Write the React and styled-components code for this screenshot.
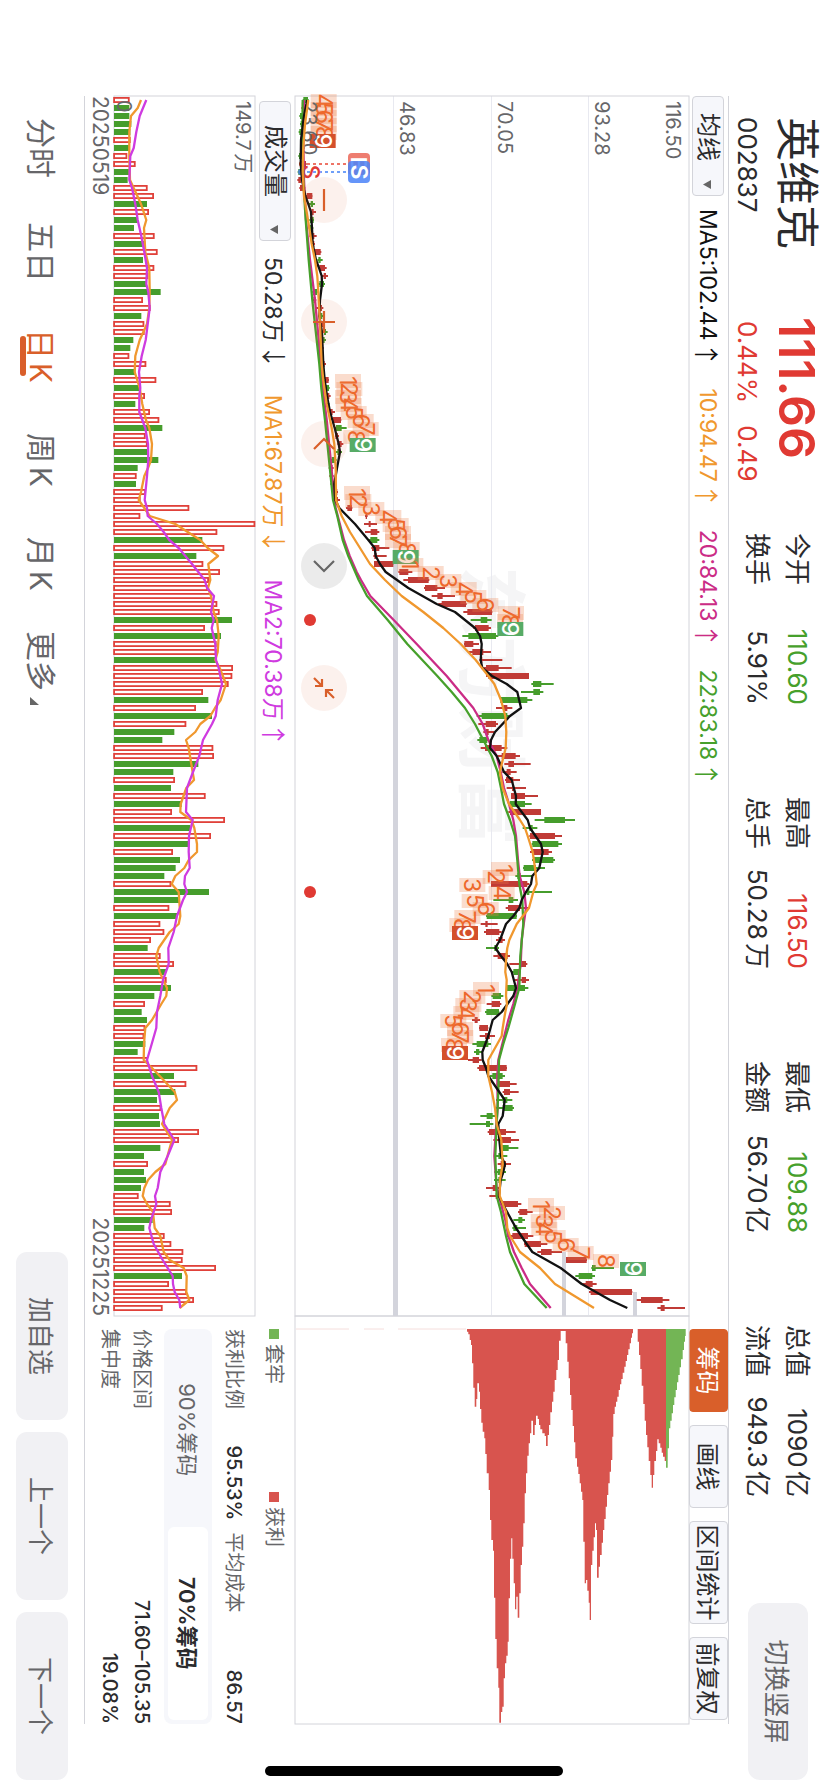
import React, { useState } from 'react';
import styled, { createGlobalStyle } from 'styled-components';

const C = {
  red: '#e03a33',
  green: '#46a02b',
  candleRed: '#c03b36',
  candleGreen: '#469d2c',
  orange: '#f0982e',
  magenta: '#cb2c86',
  purple: '#cf3be0',
  accent: '#d95f2a',
  line: '#d3d4da',
  grid: '#e8e9f0',
  ink: '#2b2b2d',
  sub: '#666669',
  panel: '#f6f7fb',
  button: '#f1f1f4',
};

const GlobalStyle = createGlobalStyle`
  * { box-sizing: border-box; }
  body { margin: 0; background: #fff; }
  button, select { font: inherit; color: inherit; margin: 0; padding: 0; border: 0; background: none; cursor: pointer; }
  button { padding-bottom: 2px; }
`;

/* The app is held sideways: the landscape stage is turned a quarter clockwise. */
const Viewport = styled.div`
  position: relative;
  width: 100vw;
  height: 100vh;
  overflow: hidden;
`;

const Stage = styled.div`
  width: 100vh;
  height: 100vw;
  transform-origin: 0 0;
  transform: translateX(100vw) rotate(90deg);
  display: flex;
  flex-direction: column;
  padding-left: 96px;
  background: #fff;
  color: ${C.ink};
  font-family: Inter, 'Noto Sans CJK SC', sans-serif;
  white-space: nowrap;
  text-autospace: normal;
`;

const Header = styled.header`
  display: flex;
  align-items: flex-start;
  height: 99px;
  padding: 6px 12px 0 21px;
`;

const Identity = styled.div`
  width: 200px;
  line-height: 50px;
`;

const StockName = styled.h1`
  margin: 0;
  font-size: 44px;
  font-weight: 400;
  line-height: 50px;
`;

const StockCode = styled.div`
  font-size: 26px;
`;

const Quote = styled.div`
  width: 216px;
  line-height: 50px;
  color: ${C.red};
`;

const Price = styled.div`
  font-size: 50px;
  font-weight: 600;
`;

const Change = styled.div`
  display: flex;
  gap: 22px;
  padding-left: 4px;
  font-size: 26px;
`;

const Stats = styled.div`
  flex: 1;
  display: flex;
  justify-content: space-between;
  padding-top: 5px;
`;

const StatColumn = styled.dl`
  width: 172px;
  margin: 0;
  font-size: 26px;
  line-height: 40px;
`;

const Stat = styled.div`
  display: flex;
  justify-content: space-between;
  dt, dd { margin: 0; }
  dd { color: ${(p) => p.$color || C.ink}; }
`;

const RotateButton = styled.button`
  width: 177px;
  height: 60px;
  margin: 14px 0 0 106px;
  border-radius: 12px;
  background: ${C.button};
  color: ${C.sub};
  font-size: 26px;
`;

const Body = styled.main`
  display: grid;
  grid-template-columns: 1220fr 408fr;
  margin-right: 68px;
  border-top: 1px solid ${C.line};
  border-bottom: 1px solid ${C.line};
`;

const ChartColumn = styled.section`
  min-width: 0;
`;

const Toolbar = styled.div`
  display: flex;
  align-items: center;
  height: ${(p) => p.$height}px;
  padding-left: ${(p) => p.$inset || 0}px;
  font-size: 23px;
  text-autospace: no-autospace;
`;

const Picker = styled.label`
  position: relative;
  width: ${(p) => p.$width}px;
  height: 32px;
  select {
    width: 100%;
    height: 32px;
    padding-left: ${(p) => p.$inset}px;
    appearance: none;
    border: 1px solid ${C.line};
    border-radius: 4px;
    background: ${C.panel};
    font-size: 24px;
    line-height: 30px;
  }
  svg {
    position: absolute;
    right: 7px;
    top: 13px;
    pointer-events: none;
  }
`;

const Readings = styled.div`
  display: flex;
  gap: ${(p) => p.$gap}px;
  padding-left: ${(p) => p.$lead}px;
`;

const Readout = styled.span`
  display: flex;
  align-items: center;
  color: ${(p) => p.$color};
`;

const Trend = styled.span`
  display: flex;
  justify-content: center;
  width: 12px;
  margin-left: 8px;
  font-family: 'Noto Sans CJK SC', sans-serif;
  font-size: 25px;
  line-height: 30px;
`;

const PlotBox = styled.div`
  position: relative;
`;

const Plot = styled.svg`
  display: block;
  width: 100%;
  height: auto;
  overflow: visible;
`;

const Controls = styled.div`
  position: absolute;
  left: 81px;
  bottom: 7px;
  display: flex;
  gap: 76px;
`;

const RoundButton = styled.button`
  display: grid;
  place-items: center;
  width: 46px;
  height: 46px;
  padding: 0;
  border-radius: 50%;
  background: ${(p) => (p.$muted ? 'rgba(120, 120, 120, 0.15)' : 'rgba(225, 100, 50, 0.09)')};
  svg {
    fill: none;
    stroke: ${(p) => (p.$muted ? '#666' : C.accent)};
    stroke-width: 2.2;
  }
`;

const Dates = styled.div`
  display: flex;
  justify-content: space-between;
  height: 28px;
  line-height: 26px;
  color: ${C.sub};
  font-size: 21px;
`;

const SideColumn = styled.aside`
  min-width: 0;
  text-autospace: no-autospace;
`;

const ToolButtons = styled.div`
  display: flex;
  gap: 13px;
  height: 39px;
  padding-left: 13px;
`;

const ToolButton = styled.button`
  width: ${(p) => (p.$wide ? 103 : 83)}px;
  height: 39px;
  border: 1px solid ${(p) => (p.$active ? C.accent : C.line)};
  border-radius: 4px;
  background: ${(p) => (p.$active ? C.accent : C.panel)};
  color: ${(p) => (p.$active ? '#fff' : C.ink)};
  font-size: 24px;
`;

const ChipPanel = styled.div`
  padding-left: 13px;
  font-size: 20px;
  color: ${C.sub};
`;

const Legend = styled.div`
  display: grid;
  grid-template-columns: 163px 1fr;
  line-height: 40px;
`;

const LegendItem = styled.span`
  display: flex;
  align-items: center;
  gap: 5px;
  &::before {
    content: '';
    width: 10px;
    height: 10px;
    background: ${(p) => p.$color};
  }
`;

const Metrics = styled.div`
  display: flex;
  justify-content: space-between;
  gap: 12px;
  line-height: ${(p) => p.$height}px;
`;

const Metric = styled.div`
  flex: 1;
  display: flex;
  justify-content: space-between;
  b {
    font-weight: 500;
    color: ${C.ink};
  }
`;

const Segments = styled.div`
  display: flex;
  height: 48px;
  margin: 2px 0 6px;
  padding: 4px;
  border-radius: 8px;
  background: ${C.panel};
`;

const Segment = styled.button`
  flex: 1;
  border-radius: 6px;
  background: ${(p) => (p.$active ? '#fff' : 'transparent')};
  color: ${(p) => (p.$active ? C.ink : C.sub)};
  font-size: 22px;
  font-weight: ${(p) => (p.$active ? 600 : 400)};
`;

const Footer = styled.footer`
  flex: 1;
  display: flex;
  align-items: center;
  justify-content: space-between;
  padding-right: 12px;
  color: ${C.sub};
`;

const Periods = styled.nav`
  display: flex;
`;

const Period = styled.button`
  position: relative;
  width: 104px;
  height: 52px;
  font-size: 30px;
  color: ${(p) => (p.$active ? C.accent : C.sub)};
  &::after {
    content: '';
    position: absolute;
    left: 32px;
    bottom: 4px;
    width: 40px;
    height: 6px;
    border-radius: 3px;
    background: ${(p) => (p.$active ? C.accent : 'transparent')};
  }
  svg { margin-left: 6px; }
`;

const Actions = styled.div`
  display: flex;
  gap: 12px;
`;

const Action = styled.button`
  width: 168px;
  height: 52px;
  border-radius: 11px;
  background: ${C.button};
  font-size: 26px;
`;

const HomeIndicator = styled.div`
  position: absolute;
  left: 32%;
  right: 32%;
  bottom: 16px;
  height: 10px;
  border-radius: 5px;
  background: #000;
  pointer-events: none;
`;

/* ---------- chart data ---------- */

const STEP = 8;
const xOf = (i) => 4 + i * STEP;
const yOf = (v) => 409 - v / 3;
const volY = (v) => 142 - (v - 101) / 3;

/* low, body start, body end, high, direction (1 up, 0 down) */
const candles = [
  [68, 70, 84, 86, 0], [64, 66, 74, 76, 1], [58, 60, 70, 72, 0], [60, 62, 72, 74, 0], [56, 58, 70, 72, 0],
  [60, 62, 68, 72, 1], [60, 63, 70, 74, 0], [55, 57, 68, 70, 0], [58, 60, 78, 80, 1], [53, 55, 66, 68, 0],
  [52, 55, 64, 66, 1], [58, 60, 72, 76, 1], [78, 80, 97, 97, 1], [87, 92, 99, 105, 0], [90, 94, 101, 108, 1],
  [88, 90, 101, 102, 0], [86, 88, 98, 100, 0], [88, 90, 103, 110, 1], [93, 95, 103, 105, 1], [103, 104, 122, 124, 1],
  [112, 115, 122, 128, 0], [117, 118, 135, 140, 1], [126, 131, 138, 144, 1], [114, 118, 132, 135, 0],
  [97, 99, 111, 113, 0], [97, 100, 107, 109, 1], [108, 117, 126, 130, 1], [116, 119, 127, 130, 0],
  [116, 120, 132, 135, 1], [128, 132, 138, 143, 0], [125, 128, 134, 138, 0], [118, 121, 128, 131, 1],
  [120, 124, 130, 132, 0], [127, 129, 134, 138, 1], [121, 124, 130, 133, 1], [129, 130, 146, 147, 1],
  [134, 137, 147, 149, 0], [138, 140, 148, 152, 1], [136, 138, 147, 149, 0], [144, 150, 158, 165, 1],
  [156, 158, 183, 184, 1], [165, 168, 185, 200, 0], [165, 166, 174, 177, 1], [172, 177, 185, 190, 1],
  [167, 172, 180, 186, 0], [150, 155, 168, 170, 0], [146, 149, 158, 161, 1], [148, 152, 158, 161, 1],
  [151, 153, 162, 164, 0], [156, 158, 172, 174, 1], [164, 166, 174, 180, 1], [198, 202, 216, 217, 1],
  [255, 257, 261, 263, 1], [252, 266, 272, 291, 1], [255, 272, 292, 298, 1], [266, 271, 292, 298, 0],
  [274, 276, 298, 328, 1], [280, 283, 290, 320, 1], [282, 282, 340, 340, 1], [355, 358, 385, 397, 1],
  [370, 384, 446, 448, 1], [432, 435, 472, 495, 1], [455, 472, 488, 525, 1], [475, 485, 558, 560, 1],
  [550, 562, 636, 637, 1], [572, 602, 622, 635, 0], [580, 585, 626, 633, 1], [547, 565, 648, 655, 0],
  [552, 553, 580, 597, 1], [566, 577, 610, 633, 1], [598, 602, 607, 667, 1], [610, 618, 656, 695, 1],
  [618, 625, 747, 747, 1], [754, 759, 784, 821, 0], [723, 760, 780, 790, 0], [661, 661, 742, 757, 0],
  [648, 670, 682, 697, 1], [590, 605, 682, 687, 0], [595, 617, 648, 654, 1], [610, 618, 626, 642, 1],
  [592, 598, 622, 628, 0], [602, 615, 665, 682, 1], [653, 665, 707, 720, 1], [673, 685, 702, 752, 1],
  [667, 680, 692, 710, 1], [675, 678, 700, 720, 1], [680, 696, 702, 738, 1], [693, 693, 735, 774, 1],
  [687, 690, 735, 755, 0], [685, 690, 783, 783, 1], [764, 793, 855, 885, 0], [728, 748, 758, 772, 0],
  [748, 750, 825, 846, 1], [755, 757, 835, 846, 0], [750, 757, 806, 816, 1], [756, 760, 820, 825, 0],
  [729, 731, 768, 795, 0], [706, 712, 722, 758, 0], [633, 633, 742, 748, 1], [730, 740, 748, 816, 0],
  [640, 686, 700, 714, 0], [677, 684, 720, 748, 1], [618, 620, 710, 711, 0], [602, 616, 623, 653, 1],
  [612, 618, 658, 665, 1], [648, 655, 668, 675, 1], [618, 643, 653, 657, 0], [640, 653, 683, 690, 1],
  [688, 722, 738, 742, 1], [695, 700, 718, 720, 0], [705, 725, 738, 747, 1], [678, 680, 735, 745, 0],
  [634, 638, 663, 670, 0], [620, 635, 660, 664, 1], [615, 619, 657, 658, 0], [576, 584, 593, 600, 1],
  [597, 598, 624, 625, 1], [599, 615, 630, 645, 1], [577, 590, 625, 633, 0], [582, 588, 598, 606, 0],
  [564, 578, 597, 605, 1], [592, 597, 680, 681, 1], [630, 637, 668, 675, 0], [650, 656, 690, 710, 1],
  [668, 672, 690, 716, 1], [648, 668, 682, 697, 0], [645, 668, 698, 702, 0], [601, 620, 638, 650, 0],
  [569, 618, 630, 640, 0], [623, 627, 678, 707, 1], [640, 662, 693, 717, 1], [657, 665, 686, 715, 0],
  [642, 655, 665, 682, 0], [653, 662, 678, 693, 1], [643, 653, 670, 678, 0], [642, 655, 662, 677, 0],
  [618, 638, 648, 662, 1], [628, 647, 655, 660, 1], [668, 668, 714, 724, 1], [714, 718, 742, 758, 1],
  [700, 715, 727, 735, 0], [697, 700, 712, 738, 0], [680, 697, 744, 760, 1], [732, 734, 783, 802, 1],
  [772, 783, 815, 846, 1], [858, 858, 920, 921, 1], [934, 936, 947, 1002, 0], [886, 896, 937, 945, 0],
  [905, 917, 938, 950, 1], [927, 932, 1056, 1057, 1], [1070, 1083, 1148, 1168, 1], [1132, 1142, 1154, 1215, 1],
];

const volumes = (
  '148R 147G 147G 153G 150G 151R 147G 141R 166R 147G 142G 202R 221R 200G 206R 172G 161G 223R 195G 232R ' +
  '188G 222R 204R 198G 241G 188R 211R 183G 192R 193R 159G 150G 147R 198R 165G 228R 177G 194R 165G 209R ' +
  '237R 246G 196R 202R 202G 234G 172G 169R 167G 197R 181R 327R 180R 525R 411R 366G 432R 348G 369R 419R ' +
  '386R 383R 395R 411R 418R 455G 374R 422G 409R 409R 409G 458R 456R 445R 368R 384G 347R 395G 318R 282G ' +
  '246G 399R 401R 354G 279G 284R 272G 376R 304G 275R 434R 330G 392R 325G 278R 299G 286G 252G 273R 386G ' +
  '297G 267R 290G 240R 252R 212R 202G 241R 281R 257G 259R 272G 222G 194R 184G 200G 195R 192R 195G 172G ' +
  '202R 351R 281G 318R 285G 230G 243R 236G 239G 356R 296R 240G 191G 203R 191G 197G 182G 175R 271R 275R ' +
  '217G 192G 253R 273R 309R 307R 407R 305G 266R 320R 341R 247R'
).split(' ').map((s) => ({ v: parseInt(s, 10), up: s.endsWith('R') }));

const averages = [
  {
    color: C.magenta,
    d: '0 72 5 70 10 72 15 78 20 90 25 105 30 116 35 125 40 140 45 152 49 161 51 167 55 192 57 209 59 230 60 243 62 271 65 341 68 410 72 500 74 540 76 580 78 608 80 625 82 650 84 662 86 672 88 687 90 700 92 708 95 714 97 719 99 733 101 738 103 731 105 725 108 722 111 712 113 700 115 685 118 667 120 655 122 652 126 653 129 647 132 643 136 650 138 663 140 676 142 685 144 702 146 725 148 750 151 812',
  },
  {
    color: C.green,
    d: '0 68 5 67 10 70 15 77 20 86 25 97 30 110 33 118 36 124 40 135 45 147 50 159 52 172 55 188 57 205 60 236 62 261 65 323 68 382 72 472 74 515 76 555 78 585 80 610 82 635 84 653 86 663 88 672 90 690 92 705 95 712 98 718 100 727 103 730 107 721 111 718 113 705 116 685 118 670 120 657 124 655 128 650 132 646 137 650 139 663 142 678 144 690 148 733 151 800',
  },
  {
    color: '#111',
    d: '0 82 2 72 5 63 8 62 10 66 12 76 13 85 14 93 16 96 18 98 20 108 21 117 22 125 23 126 25 120 27 118 29 126 33 130 35 134 37 141 39 150 41 164 43 176 44 180 46 171 48 163 50 166 51 178 53 225 55 265 56 284 57 287 58 300 59 317 61 385 63 470 64 525 66 585 67 600 68 605 70 602 71 607 72 636 73 680 74 712 76 723 77 690 79 645 80 633 81 630 82 650 84 672 85 695 87 708 88 707 90 743 91 750 93 783 94 788 96 778 97 757 98 753 99 738 100 725 101 718 102 700 103 678 105 660 106 646 107 663 108 682 109 695 111 708 112 700 114 665 115 638 117 625 119 607 120 608 121 618 122 625 124 658 125 674 127 668 128 655 130 658 132 663 133 675 134 670 135 662 137 657 138 668 141 708 143 740 144 757 146 842 148 905 150 990 151 1042',
  },
  {
    color: C.orange,
    d: '0 85 3 75 6 70 9 68 12 72 15 84 18 95 20 105 22 112 24 115 28 120 33 125 35 130 38 140 41 155 43 163 46 167 50 168 52 185 54 210 56 240 58 270 60 315 62 365 64 430 66 490 68 542 70 587 72 625 73 643 75 663 77 676 79 679 81 677 83 665 84 660 86 668 88 687 90 720 91 735 92 743 94 758 96 765 98 770 99 760 101 747 103 710 105 688 106 682 107 679 109 676 110 680 112 678 113 681 114 676 116 668 117 665 118 652 120 625 122 625 124 636 126 645 128 650 130 664 133 668 135 660 137 659 139 678 141 682 142 690 144 720 146 780 148 825 151 942',
  },
];

const volumeAverages = [
  {
    color: C.orange,
    d: '0 182 1 172 2 152 4 147 7 147 10 149 11 160 13 182 15 198 16 191 19 195 21 207 24 208 26 207 28 200 30 178 32 165 34 163 36 178 38 186 40 197 41 207 43 215 45 212 46 203 47 192 49 182 50 175 51 192 52 208 53 285 54 322 55 360 56 382 57 413 58 384 60 390 61 383 62 392 64 400 65 410 67 415 69 412 70 405 71 418 73 437 75 421 76 404 77 390 78 360 79 345 80 317 81 325 83 333 85 341 86 318 88 301 89 300 90 333 91 342 93 350 94 350 95 325 96 312 97 285 98 274 99 295 102 300 103 295 104 268 106 235 107 228 109 238 111 260 112 258 113 243 115 215 116 195 118 191 120 190 121 215 122 238 124 283 125 290 126 268 128 245 130 275 131 268 133 255 134 225 135 203 136 192 137 187 138 200 139 218 141 223 142 240 144 250 145 268 146 310 147 319 149 318 150 327 151 298',
  },
  {
    color: C.purple,
    d: '0 198 2 178 4 168 6 160 7 150 10 147 11 155 13 165 15 172 17 183 19 192 21 200 23 198 24 204 26 208 28 202 30 196 32 184 34 176 36 180 37 177 39 177 41 195 43 203 45 204 47 200 50 193 51 200 52 202 53 230 54 250 55 267 56 295 58 335 60 373 61 380 62 401 64 392 65 400 66 394 68 405 70 407 71 415 73 425 75 412 77 406 78 395 80 368 82 357 84 338 86 320 89 317 90 337 92 326 94 325 96 328 97 314 98 312 99 320 100 308 102 290 104 280 106 264 108 265 110 248 112 240 114 230 116 228 118 214 120 200 122 215 124 235 126 243 128 252 130 282 132 262 134 240 136 232 137 224 138 228 140 212 141 207 143 220 145 247 147 277 148 278 149 283 150 297 151 300',
  },
];

/* sequence markers: first bar, first digit, tone of the closing 9, centre of each marker */
const sequences = [
  { bar: 0, from: 4, end: '#d4502b', at: [131, 131, 131, 131, 131, 128] },
  { bar: 35, from: 1, end: '#57ab66', at: [204, 208, 204, 206, 221, 242, 257, 229, 248] },
  { bar: 49, from: 1, end: '#57ab66', at: [231, 235, 274, 325, 347, 354, 354, 380, 377] },
  { bar: 58, from: 1, end: '#57ab66', at: [391, 452, 505, 551, 580, 616, 693, 690, 691] },
  { bar: 96, from: 1, end: '#d4502b', at: [672, 647, 577, 665, 584, 617, 562, 547, 555] },
  { bar: 111, from: 1, end: '#d4502b', at: [618, 577, 565, 559, 520, 540, 541, 522, 525] },
  { bar: 138, from: 1, end: '#57ab66', at: [783, 816, 791, 793, 818, 857, 902, 978, 1059] },
];

const profitChips =
  '527 87 531 95 535 103 539 120 543 135 546 190 550 263 554 320 559 297 562 250 567 275 570 327 574 368 578 395 583 415 586 462 590 520 596 570 600 660 604 720 609 752 612 893 616 1017 620 1105 625 1163 628 1268 633 1236 637 1220 641 1135 645 1090 649 1067 653 1025 656 895 660 776 664 715 667 776 671 850 675 928 679 890 683 953 688 880 692 795 696 740 700 670 704 580 708 520 712 467 716 430 720 400 724 362 729 405 734 375 738 347 743 357 747 375 751 388 757 400 764 408 768 438 773 405 777 375 781 337 786 305 790 275 794 240 799 210 803 180 807 122 812 93 824 93 827 130 832 185 836 235 840 285 844 330 848 378 852 427 856 475 861 500 865 522 869 550 873 575 877 600 880 725 884 850 888 840 892 872 896 908 899 960 903 795 907 752 911 712 915 670 918 690 921 833 926 800 930 765 935 728 939 690 943 657 947 620 951 585 955 550 959 515 963 480 967 410 970 342 974 320 978 305 982 290 986 270 990 253 994 237 998 218 1003 200 1007 183 1011 165 1015 148 1019 130 1023 113 1026 100 1029 87 1040 87 1043 125 1047 165 1051 207 1055 257 1060 312 1064 362 1068 405 1072 442 1076 483 1081 525 1085 563 1089 525 1093 483 1098 453 1102 418 1106 430 1111 443 1115 458 1119 470 1124 483 1128 492';
const trappedChips =
  '1128 503 1133 445 1137 385 1141 362 1145 340 1149 315 1153 292 1157 270 1161 247 1165 225 1169 202 1173 178 1178 150 1182 125 1185 108 1187 87';

const pairs = (s) => {
  const n = s.split(' ').map(Number);
  return n.reduce((out, v, k) => (k % 2 ? out : [...out, [v, n[k + 1]]]), []);
};

const linePath = (d, y) => 'M' + pairs(d).map(([i, v]) => `${xOf(i)} ${y(v).toFixed(1)}`).join('L');

/* stepped silhouette: each price level is a flat bar */
const chipPath = (d) => {
  const pts = pairs(d);
  const y = (v) => (399 - v / 3).toFixed(1);
  const x = (v) => (13 + (v - 87) / 3).toFixed(1);
  let out = `M13 ${y(pts[0][0])}`;
  pts.forEach(([v, l], k) => {
    const next = pts[k + 1] ? pts[k + 1][0] : v + 3;
    out += `H${x(l)}V${y(next)}`;
  });
  return `${out}H13Z`;
};

const FONT = "Inter, 'Noto Sans CJK SC', sans-serif";

function PriceChart() {
  return (
    <Plot viewBox="0 0 1220 395" role="img" aria-label="日K" fontFamily={FONT}>
      <text x="470" y="224" fontSize="70" fontWeight="700" fill="#f5f5f6">东方财富</text>
      {[100, 197, 295].map((y) => (
        <rect key={y} x="0" y={y} width="1220" height="1" fill={C.grid} />
      ))}
      <g fill="#d3d4dc">
        <rect x="468" y="291" width="752" height="5" />
        <rect x="1156" y="123" width="64" height="4" />
        <rect x="1196" y="52" width="24" height="4" />
      </g>
      <rect x="0" y="0" width="1220" height="394" fill="none" stroke={C.line} strokeWidth="1" />
      {candles.map(([lo, a, b, hi, up], i) => (
        <g key={i} fill={up ? C.candleRed : C.candleGreen}>
          <rect x={xOf(i) - 1} y={yOf(hi)} width="2" height={(hi - lo) / 3} />
          <rect x={xOf(i) - 3} y={yOf(b)} width="6" height={(b - a) / 3} />
        </g>
      ))}
      {sequences.map((s) => (
        <g key={s.bar} fontSize="23" textAnchor="middle">
          {s.at.map((v, k) => {
            const digit = s.from + k;
            const x = xOf(s.bar + k) + 1;
            const last = digit === 9;
            return (
              <g key={digit}>
                <rect x={x - 7} y={yOf(v) - 13} width="14" height="26" fill={last ? s.end : '#ee7f45'} fillOpacity={last ? 1 : 0.27} />
                <text x={x} y={yOf(v) + 8} fill={last ? '#fff' : '#ee682b'} fontWeight={last ? 500 : 400}>{digit}</text>
              </g>
            );
          })}
        </g>
      ))}
      <g fontSize="20" fill={C.sub}>
        <text x="5" y="23">116.50</text>
        <text x="5" y="94">93.28</text>
        <text x="5" y="191">70.05</text>
        <text x="5" y="289">46.83</text>
        <text x="5" y="387">23.60</text>
      </g>
      <g fill="none" strokeWidth="2" strokeDasharray="3 3">
        <path d="M68 388V341" stroke="#ee7466" />
        <path d="M76 388V341" stroke="#6f9ff8" />
      </g>
      <rect x="57" y="319" width="22" height="22" rx="4" fill="#ee7d70" />
      <text x="68" y="338" fontSize="22" fontWeight="600" fill="#fff" textAnchor="middle">B</text>
      <rect x="65" y="319" width="22" height="22" rx="4" fill="#4a82f8" fillOpacity="0.85" />
      <text x="76" y="338" fontSize="23" fontWeight="600" fill="#fff" textAnchor="middle">S</text>
      <text x="76" y="386" fontSize="23" fontWeight="500" fill={C.red} textAnchor="middle">S</text>
      <circle cx="68" cy="387" r="3" fill="#d4502b" />
      <circle cx="76" cy="388" r="3" fill="#4a82c8" />
      {averages.map((a) => (
        <path key={a.color} d={linePath(a.d, yOf)} fill="none" stroke={a.color} strokeWidth="2.3" strokeLinejoin="round" />
      ))}
      <circle cx="524" cy="379" r="6" fill={C.red} />
      <circle cx="796" cy="379" r="6" fill={C.red} />
    </Plot>
  );
}

function VolumeChart() {
  return (
    <Plot viewBox="0 0 1220 143" role="img" aria-label="成交量" fontFamily={FONT}>
      <rect x="0" y="1" width="1220" height="141" fill="none" stroke={C.line} strokeWidth="1" />
      {volumes.map(({ v, up }, i) => {
        const y = volY(v);
        return up ? (
          <rect key={i} x={xOf(i) - 2.1} y={y + 0.9} width="4.2" height={141 - y} fill="#fff" stroke="#e0413a" strokeWidth="1.8" />
        ) : (
          <rect key={i} x={xOf(i) - 3} y={y} width="6" height={142 - y} fill={C.candleGreen} />
        );
      })}
      <g fontSize="20" fill={C.sub}>
        <text x="5" y="20">149.7万</text>
        <text x="4" y="139">0</text>
      </g>
      {volumeAverages.map((a) => (
        <path key={a.color} d={linePath(a.d, volY)} fill="none" stroke={a.color} strokeWidth="2.3" strokeLinejoin="round" />
      ))}
    </Plot>
  );
}

function ChipChart() {
  return (
    <Plot viewBox="0 0 408 395" role="img" aria-label="筹码">
      <rect x="0" y="0" width="408" height="394" fill="none" stroke={C.line} strokeWidth="1" />
      <path d="M13 393V340M13 325V305M13 291V223" stroke="#f5dedc" strokeWidth="1" />
      <path d={chipPath(profitChips)} fill="#d8544e" />
      <path d={chipPath(trappedChips)} fill="#73b555" />
    </Plot>
  );
}

function Dropdown({ label, options, width, inset }) {
  return (
    <Picker $width={width} $inset={inset}>
      <select aria-label={label}>
        {options.map((o) => (
          <option key={o}>{o}</option>
        ))}
      </select>
      <svg width="9" height="8" viewBox="0 0 9 8" aria-hidden="true">
        <path d="M0 0h9L4.500 8z" fill="#666" />
      </svg>
    </Picker>
  );
}

function Reading({ color, text, trend }) {
  return (
    <Readout $color={color}>
      {text}
      <Trend>{trend}</Trend>
    </Readout>
  );
}

const stats = [
  [['今开', '110.60', C.green], ['换手', '5.91%']],
  [['最高', '116.50', C.red], ['总手', '50.28万']],
  [['最低', '109.88', C.green], ['金额', '56.70亿']],
  [['总值', '1090亿'], ['流值', '949.3亿']],
];

const controls = [
  { name: '缩小', d: 'M1 12H23' },
  { name: '放大', d: 'M1 12H23M12 1V23' },
  { name: '向左', d: 'M17 2L7 12L17 22' },
  { name: '向右', d: 'M7 2L17 12L7 22', muted: true },
  { name: '退出全屏', d: 'M2 22L10 14M3 14H10V21M22 2L14 10M21 10H14V3' },
];

const periods = ['分时', '五日', '日K', '周K', '月K', '更多'];
const tools = ['筹码', '画线', '区间统计', '前复权'];

export default function App() {
  const [period, setPeriod] = useState('日K');
  const [range, setRange] = useState('70%筹码');

  return (
    <Viewport>
      <GlobalStyle />
      <Stage>
        <Header>
          <Identity>
            <StockName>英维克</StockName>
            <StockCode>002837</StockCode>
          </Identity>
          <Quote>
            <Price>111.66</Price>
            <Change>
              <span>0.44%</span>
              <span>0.49</span>
            </Change>
          </Quote>
          <Stats>
            {stats.map((column) => (
              <StatColumn key={column[0][0]}>
                {column.map(([name, value, color]) => (
                  <Stat key={name} $color={color}>
                    <dt>{name}</dt>
                    <dd>{value}</dd>
                  </Stat>
                ))}
              </StatColumn>
            ))}
          </Stats>
          <RotateButton>切换竖屏</RotateButton>
        </Header>

        <Body>
          <ChartColumn>
            <Toolbar $height={39}>
              <Dropdown label="主图指标" options={['均线', 'BOLL']} width={100} inset={16} />
              <Readings $lead={13} $gap={28}>
                <Reading color="#111" text="MA5:102.44" trend="↑" />
                <Reading color={C.orange} text="10:94.47" trend="↑" />
                <Reading color={C.magenta} text="20:84.13" trend="↑" />
                <Reading color={C.green} text="22:83.18" trend="↑" />
              </Readings>
            </Toolbar>
            <PlotBox>
              <PriceChart />
              <Controls>
                {controls.map((c) => (
                  <RoundButton key={c.name} $muted={c.muted} aria-label={c.name}>
                    <svg width="24" height="24" viewBox="0 0 24 24">
                      <path d={c.d} />
                    </svg>
                  </RoundButton>
                ))}
              </Controls>
            </PlotBox>
            <Toolbar $height={38} $inset={5}>
              <Dropdown label="副图指标" options={['成交量', 'MACD']} width={140} inset={23} />
              <Readings $lead={16} $gap={32}>
                <Reading color={C.ink} text="50.28万" trend="↓" />
                <Reading color={C.orange} text="MA1:67.87万" trend="↓" />
                <Reading color={C.purple} text="MA2:70.38万" trend="↑" />
              </Readings>
            </Toolbar>
            <VolumeChart />
            <Dates>
              <time>20250519</time>
              <time>20251225</time>
            </Dates>
          </ChartColumn>

          <SideColumn>
            <ToolButtons>
              {tools.map((t) => (
                <ToolButton key={t} $active={t === '筹码'} $wide={t.length > 3}>{t}</ToolButton>
              ))}
            </ToolButtons>
            <ChipChart />
            <ChipPanel>
              <Legend>
                <LegendItem $color="#73b555">套牢</LegendItem>
                <LegendItem $color="#d8544e">获利</LegendItem>
              </Legend>
              <Metrics $height={40}>
                <Metric>获利比例<b>95.53%</b></Metric>
                <Metric>平均成本<b>86.57</b></Metric>
              </Metrics>
              <Segments>
                {['90%筹码', '70%筹码'].map((s) => (
                  <Segment key={s} $active={s === range} aria-pressed={s === range} onClick={() => setRange(s)}>{s}</Segment>
                ))}
              </Segments>
              <Metrics $height={32}>
                <Metric>价格区间<b>71.60–105.35</b></Metric>
              </Metrics>
              <Metrics $height={32}>
                <Metric>集中度<b>19.08%</b></Metric>
              </Metrics>
            </ChipPanel>
          </SideColumn>
        </Body>

        <Footer>
          <Periods>
            {periods.map((p) => (
              <Period key={p} $active={p === period} onClick={() => setPeriod(p)}>
                {p}
                {p === '更多' && (
                  <svg width="8" height="9" viewBox="0 0 8 9" aria-hidden="true">
                    <path d="M8 0V9H0z" fill="#666" />
                  </svg>
                )}
              </Period>
            ))}
          </Periods>
          <Actions>
            <Action>加自选</Action>
            <Action>上一个</Action>
            <Action>下一个</Action>
          </Actions>
        </Footer>
      </Stage>
      <HomeIndicator />
    </Viewport>
  );
}
